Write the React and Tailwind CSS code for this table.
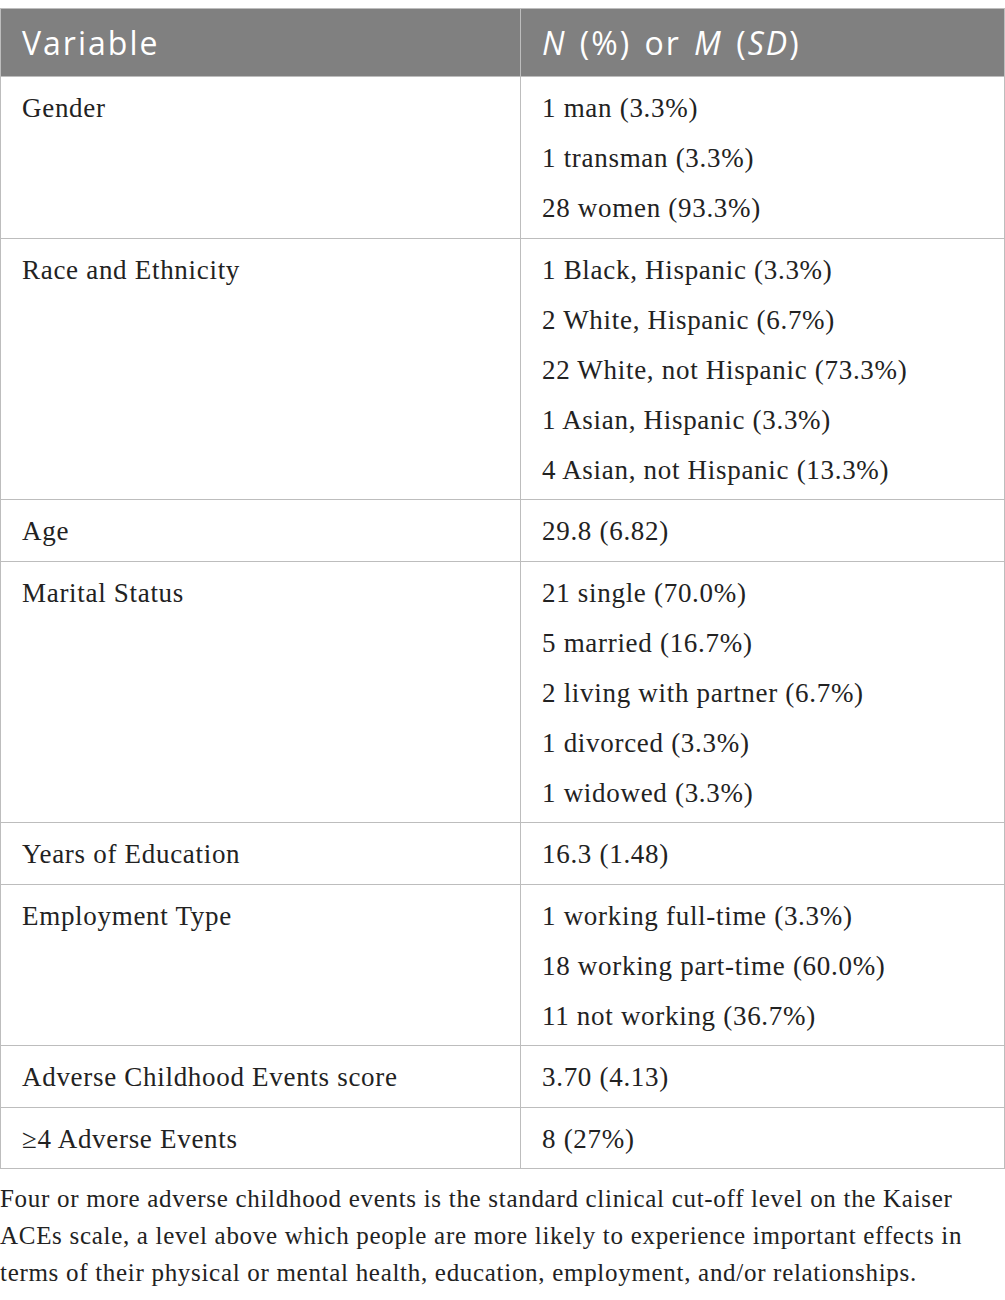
const rows = [
  { label: 'Gender', values: ['1 man (3.3%)', '1 transman (3.3%)', '28 women (93.3%)'] },
  {
    label: 'Race and Ethnicity',
    values: [
      '1 Black, Hispanic (3.3%)',
      '2 White, Hispanic (6.7%)',
      '22 White, not Hispanic (73.3%)',
      '1 Asian, Hispanic (3.3%)',
      '4 Asian, not Hispanic (13.3%)',
    ],
  },
  { label: 'Age', values: ['29.8 (6.82)'] },
  {
    label: 'Marital Status',
    values: [
      '21 single (70.0%)',
      '5 married (16.7%)',
      '2 living with partner (6.7%)',
      '1 divorced (3.3%)',
      '1 widowed (3.3%)',
    ],
  },
  { label: 'Years of Education', values: ['16.3 (1.48)'] },
  {
    label: 'Employment Type',
    values: ['1 working full-time (3.3%)', '18 working part-time (60.0%)', '11 not working (36.7%)'],
  },
  { label: 'Adverse Childhood Events score', values: ['3.70 (4.13)'] },
  { label: '≥4 Adverse Events', values: ['8 (27%)'] },
]

function App() {
  return (
    <div className="w-[1005px] bg-white pt-[8px] text-[#222] font-['Liberation_Serif',serif]">
      <div className="border border-[#bdbdbd]">
        <div className="flex bg-[#808080] text-white font-['Open_Sans',sans-serif] text-[32px] tracking-[2px] h-[67px] items-center">
          <div className="w-[520px] pl-[21px] border-r border-[#bdbdbd] h-full flex items-center">Variable</div>
          <div className="flex-1 pl-[21px] [word-spacing:3px]">
            <i>N</i> (%) or <i>M</i> (<i>SD</i>)
          </div>
        </div>
        {rows.map(row => (
          <div key={row.label} className="flex border-t border-[#bdbdbd] text-[27px] tracking-[0.7px] leading-[50px]">
            <div className="w-[520px] pl-[21px] pt-[6px] pb-[4.5px] border-r border-[#bdbdbd]">{row.label}</div>
            <div className="flex-1 pl-[21px] pt-[6px] pb-[4.5px]">
              {row.values.map(v => (
                <div key={v}>{v}</div>
              ))}
            </div>
          </div>
        ))}
      </div>
      <p className="font-['Liberation_Serif','Times_New_Roman',serif] text-[25px] tracking-[0.7px] leading-[37px] pt-[11px] whitespace-nowrap">
        Four or more adverse childhood events is the standard clinical cut-off level on the Kaiser
        <br />
        ACEs scale, a level above which people are more likely to experience important effects in
        <br />
        terms of their physical or mental health, education, employment, and/or relationships.
      </p>
    </div>
  )
}

export default App
